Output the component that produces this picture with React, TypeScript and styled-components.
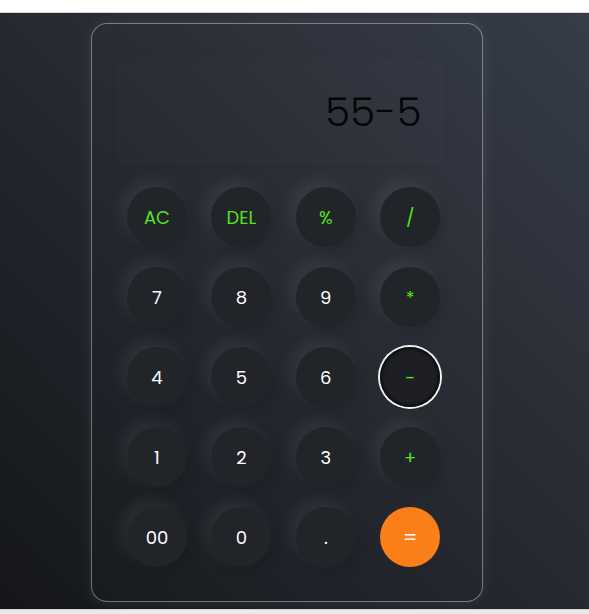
import React from "react";
import styled, { createGlobalStyle, css } from "styled-components";

const Global = createGlobalStyle`
  html, body { margin: 0; padding: 0; }
  body {
    background: #e9e9e9;
    font-family: "Poppins", "Inter", "Noto Sans", sans-serif;
  }
`;

const Shell = styled.div`
  background: #ffffff;
  padding-top: 12px;
`;

const Screen = styled.main`
  height: 598px;
  border-top: 1px solid #d6d6d6;
  border-bottom: 1px solid #d6d6d6;
  background: linear-gradient(to top right, #14161a 0%, #252930 50%, #363c48 100%);
  padding: 10px 0 0 91px;
  box-sizing: border-box;
`;

const Card = styled.section`
  width: 392px;
  height: 579px;
  box-sizing: border-box;
  border: 1px solid rgba(255, 255, 255, 0.38);
  border-radius: 16px;
  background: rgba(255, 255, 255, 0.008);
  box-shadow: 0 0 14px rgba(255, 255, 255, 0.09);
  padding: 34px 0 0 25px;
  display: flex;
  flex-direction: column;
`;

const Display = styled.div`
  width: 328px;
  height: 107px;
  box-sizing: border-box;
  padding-right: 23px;
  display: flex;
  align-items: center;
  justify-content: flex-end;
  background: rgba(255, 255, 255, 0.006);
  box-shadow: 0 0 5px rgba(0, 0, 0, 0.05);
  color: #050505;
  font-size: 40px;
  font-weight: 300;
  letter-spacing: 0.5px;
`;

const Keypad = styled.div`
  margin: 22px 0 0 10px;
  display: grid;
  grid-template-columns: repeat(4, 60px);
  grid-auto-rows: 60px;
  column-gap: 24.4px;
  row-gap: 20px;
`;

type Variant = "num" | "op" | "eq";

const Key = styled.button<{ $variant: Variant; $active?: boolean }>`
  width: 60px;
  height: 60px;
  border-radius: 50%;
  border: none;
  padding: 0;
  font-family: inherit;
  font-size: 18px;
  font-weight: 400;
  display: flex;
  align-items: center;
  justify-content: center;
  background: #212429;
  color: #ffffff;
  box-shadow: -6px -6px 16px rgba(255, 255, 255, 0.075), 4px 4px 12px rgba(0, 0, 0, 0.12);
  ${(p) =>
    p.$variant === "op" &&
    css`
      color: #55e51b;
    `}
  ${(p) =>
    p.$variant === "eq" &&
    css`
      background: #fb7f18;
      color: #ffffff;
      font-size: 20px;
      box-shadow: none;
    `}
  ${(p) =>
    p.$active &&
    css`
      background: #1d1f24;
      box-shadow: 0 0 0 2px #f2f2f2, inset 0 0 3px 2px #0d0e10;
    `}
`;

const keys: { label: string; variant: Variant; active?: boolean }[] = [
  { label: "AC", variant: "op" },
  { label: "DEL", variant: "op" },
  { label: "%", variant: "op" },
  { label: "/", variant: "op" },
  { label: "7", variant: "num" },
  { label: "8", variant: "num" },
  { label: "9", variant: "num" },
  { label: "*", variant: "op" },
  { label: "4", variant: "num" },
  { label: "5", variant: "num" },
  { label: "6", variant: "num" },
  { label: "-", variant: "op", active: true },
  { label: "1", variant: "num" },
  { label: "2", variant: "num" },
  { label: "3", variant: "num" },
  { label: "+", variant: "op" },
  { label: "00", variant: "num" },
  { label: "0", variant: "num" },
  { label: ".", variant: "num" },
  { label: "=", variant: "eq" },
];

export default function App() {
  return (
    <>
      <Global />
      <Shell>
        <Screen>
          <Card>
            <Display>55-5</Display>
            <Keypad>
              {keys.map((k) => (
                <Key key={k.label} $variant={k.variant} $active={k.active}>
                  {k.label}
                </Key>
              ))}
            </Keypad>
          </Card>
        </Screen>
      </Shell>
    </>
  );
}
